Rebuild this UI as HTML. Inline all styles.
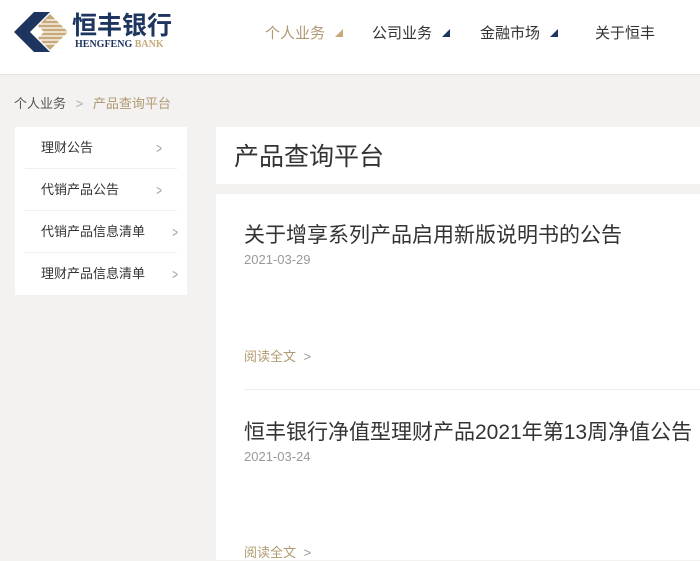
<!DOCTYPE html>
<html><head><meta charset="utf-8"><style>
*{margin:0;padding:0;box-sizing:border-box}
body{width:700px;height:560px;overflow:hidden;background:#f3f2f0;font-family:"Liberation Sans","Noto Sans CJK SC",sans-serif;position:relative}
.hd{position:absolute;left:0;top:0;width:700px;height:75px;background:#fff;border-bottom:1px solid #e6e4e0}
.nav{position:absolute;top:22px;font-size:15px;color:#333}
.nav svg{margin-left:10px;vertical-align:1px}
.bc{position:absolute;top:93px;left:14px;font-size:13px;color:#555}
.side{position:absolute;left:15px;top:127px;width:172px;height:168px;background:#fff}
.side div{height:42px;line-height:42px;margin:0 10px;padding-left:16px;font-size:13px;color:#333;border-bottom:1px solid #f0efed;position:relative}
.side div span{position:absolute;right:14px;color:#999;font-size:14px;transform:scaleX(0.7)}
.side div.l span{right:-2px}
.title{position:absolute;left:216px;top:127px;width:484px;height:57px;background:#fff;font-size:25px;color:#333;padding-left:18px;line-height:60px}
.main{position:absolute;left:216px;top:194px;width:484px;height:366px;background:#fff}
.it{position:absolute;left:28px;font-size:21px;color:#333;white-space:nowrap}
.dt{position:absolute;left:28px;font-size:13px;color:#999}
.rd{position:absolute;left:28px;font-size:13px;color:#b09a73}
</style></head><body>
<div class="hd">
<svg style="position:absolute;left:14px;top:12px" width="54" height="40" viewBox="0 0 54 40">
<polygon points="20,0 36,0 16,20 36,40 20,40 0,20" fill="#1e3560"/>
<polygon points="36,2 54,20 36,38 24,26 30,20 24,14" fill="#c7a97a"/>
<g stroke="#fff" stroke-width="1.3"><line x1="26" y1="12" x2="54" y2="12"/><line x1="26" y1="16" x2="54" y2="16"/><line x1="28" y1="20" x2="54" y2="20"/><line x1="26" y1="24" x2="54" y2="24"/><line x1="26" y1="28" x2="54" y2="28"/><line x1="30" y1="32" x2="54" y2="32"/><line x1="32" y1="8" x2="54" y2="8"/></g>
</svg>
<div style="position:absolute;left:72px;top:12px;font-size:25px;font-weight:bold;color:#1e3560;letter-spacing:0;line-height:28px">恒丰银行</div>
<div style="position:absolute;left:75px;top:39px;font-size:10px;font-family:'Liberation Serif',serif;font-weight:bold;color:#1e3560">HENGFENG <span style="color:#c7a97a">BANK</span></div>
<div class="nav" style="left:265px;color:#b09a73">个人业务<svg width="8" height="8"><polygon points="8,0 8,8 0,8" fill="#c7a97a"/></svg></div>
<div class="nav" style="left:372px">公司业务<svg width="8" height="8"><polygon points="8,0 8,8 0,8" fill="#1e3560"/></svg></div>
<div class="nav" style="left:480px">金融市场<svg width="8" height="8"><polygon points="8,0 8,8 0,8" fill="#1e3560"/></svg></div>
<div class="nav" style="left:595px">关于恒丰</div>
</div>
<div class="bc">个人业务 <span style="color:#aaa;margin:0 6px">&gt;</span> <span style="color:#b09a73">产品查询平台</span></div>
<div class="side">
<div>理财公告<span>&gt;</span></div>
<div>代销产品公告<span>&gt;</span></div>
<div class="l">代销产品信息清单<span>&gt;</span></div>
<div class="l" style="border:none">理财产品信息清单<span>&gt;</span></div>
</div>
<div class="title">产品查询平台</div>
<div class="main">
<div class="it" style="top:25px">关于增享系列产品启用新版说明书的公告</div>
<div class="dt" style="top:58px">2021-03-29</div>
<div class="rd" style="top:152px">阅读全文 <span style="color:#999;margin-left:4px">&gt;</span></div>
<div style="position:absolute;left:28px;right:0;top:195px;border-top:1px solid #eee"></div>
<div class="it" style="top:222px">恒丰银行净值型理财产品2021年第13周净值公告</div>
<div class="dt" style="top:255px">2021-03-24</div>
<div class="rd" style="top:348px">阅读全文 <span style="color:#999;margin-left:4px">&gt;</span></div>
</div>
</body></html>
